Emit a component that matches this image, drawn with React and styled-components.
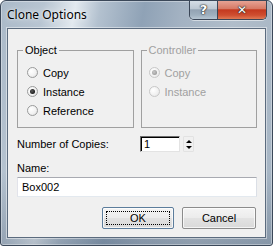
import React from "react";
import styled, { createGlobalStyle, css } from "styled-components";

const Global = createGlobalStyle`
  html, body { margin: 0; padding: 0; background: #ffffff; }
  body { width: 273px; height: 246px; overflow: hidden; }
  * { box-sizing: border-box; }
`;

const Frame = styled.div`
  width: 273px;
  height: 246px;
  display: flex;
  flex-direction: column;
  border: 1px solid #3b4859;
  border-radius: 6px 6px 3px 3px;
  background:
    linear-gradient(180deg, rgba(255,255,255,0) 0%, rgba(255,255,255,0) 70%, rgba(40,60,85,0.25) 100%),
    linear-gradient(100deg, #aab9c8 0%, #b8c5d2 14%, #e2e9ef 24%, #b3c1cf 32%, #8fa2b6 46%, #a3b2c2 58%, #b0bdca 75%, #a5b4c3 100%);
  box-shadow: inset 0 0 0 1px rgba(255,255,255,0.35);
  padding: 0 6px 7px 6px;
  overflow: hidden;
`;

const TitleBar = styled.div`
  height: 28px;
  display: flex;
  align-items: flex-start;
`;

const Title = styled.div`
  font-family: "Noto Sans", "Open Sans", sans-serif;
  font-size: 12px;
  color: #000;
  margin: 6px 0 0 0;
  line-height: 16px;
  text-shadow: 0 0 6px rgba(255,255,255,0.9), 0 0 2px rgba(255,255,255,0.8);
`;

const Caption = styled.div`
  margin-left: auto;
  margin-right: -1px;
  margin-top: -1px;
  display: flex;
  height: 20px;
  border: 1px solid #3a4657;
  border-top: none;
  border-radius: 0 0 5px 5px;
  overflow: hidden;
  box-shadow: 0 1px 0 rgba(255,255,255,0.5);
`;

const CapButton = styled.div`
  width: ${(p) => p.$w}px;
  height: 100%;
  display: flex;
  align-items: center;
  justify-content: center;
  font-family: "DejaVu Sans", sans-serif;
  font-weight: bold;
  font-size: ${(p) => p.$fs}px;
  color: #fff;
  text-shadow: 0 0 1px #222, 0 0 1px #222, 0 0 2px #333;
  ${(p) =>
    p.$close
      ? css`
          background: linear-gradient(180deg, #e8a89a 0%, #d77a66 45%, #c4391f 52%, #cf4e30 80%, #e07a55 100%);
        `
      : css`
          border-right: 1px solid #3a4657;
          background: linear-gradient(180deg, #d8e0e8 0%, #bdc8d3 45%, #93a3b3 52%, #9fb0bf 80%, #b7c6d2 100%);
        `}
`;

const Client = styled.div`
  flex: 1;
  background: #f0f0f0;
  border: 1px solid #5b6b7e;
  box-shadow: 0 0 0 1px rgba(255,255,255,0.45);
  display: flex;
  flex-direction: column;
  padding: 15px 8px 8px 9px;
  font-family: "Liberation Sans", Arial, sans-serif;
  font-size: 11px;
  color: #000;
`;

const Groups = styled.div`
  display: flex;
  gap: 7px;
`;

const Group = styled.fieldset`
  margin: 0;
  width: ${(p) => p.$w}px;
  height: 84px;
  border: 1px solid #a0a0a0;
  border-radius: 0;
  padding: 6px 0 0 ${(p) => p.$pl}px;
  display: flex;
  flex-direction: column;
  color: ${(p) => (p.$disabled ? "#a0a0a0" : "#000")};
`;

const Legend = styled.legend`
  padding: 0 2px;
  margin-left: ${(p) => p.$ml}px;
  line-height: 13px;
  font-size: 11px;
`;

const RadioRow = styled.label`
  display: flex;
  align-items: center;
  height: 19px;
  gap: 5px;
`;

const RadioCircle = styled.span`
  width: 11px;
  height: 11px;
  border-radius: 50%;
  flex: none;
  display: flex;
  align-items: center;
  justify-content: center;
  border: 1px solid ${(p) => (p.$disabled ? "#c8c8c8" : "#9a9b9b")};
  background: ${(p) =>
    p.$disabled
      ? "radial-gradient(circle at 35% 35%, #ffffff 0%, #f0f0f0 60%, #dedede 100%)"
      : "radial-gradient(circle at 35% 35%, #ffffff 0%, #f2f2f2 55%, #d8d8d8 100%)"};
  &::after {
    content: "";
    width: 5px;
    height: 5px;
    border-radius: 50%;
    display: ${(p) => (p.$checked ? "block" : "none")};
    background: ${(p) =>
      p.$disabled
        ? "radial-gradient(circle at 40% 40%, #c8c8c8, #8c8c8c)"
        : "radial-gradient(circle at 40% 40%, #5a5a5a, #000)"};
  }
`;

const Radio = ({ label, checked, disabled }) => (
  <RadioRow>
    <RadioCircle $checked={checked} $disabled={disabled} />
    <span>{label}</span>
  </RadioRow>
);

const CopiesRow = styled.div`
  display: flex;
  align-items: center;
  margin-top: 8px;
  height: 16px;
`;

const FieldLabel = styled.span`
  width: 123px;
`;

const SpinInput = styled.div`
  width: 40px;
  height: 16px;
  background: #fff;
  border-top: 1px solid #6d6d6d;
  border-left: 1px solid #6d6d6d;
  border-right: 1px solid #e3e3e3;
  border-bottom: 1px solid #e3e3e3;
  box-shadow: inset 1px 1px 0 #000;
  padding: 1px 0 0 3px;
  line-height: 13px;
`;

const Spinner = styled.div`
  width: 11px;
  height: 16px;
  margin-left: 3px;
  display: flex;
  flex-direction: column;
  align-items: center;
  justify-content: center;
  gap: 3px;
  border: 1px solid #e2e2e2;
  border-radius: 1px;
`;

const Arrow = styled.span`
  width: 0;
  height: 0;
  border-left: 3px solid transparent;
  border-right: 3px solid transparent;
  ${(p) =>
    p.$down
      ? css`border-top: 3px solid #000;`
      : css`border-bottom: 3px solid #000;`}
`;

const NameLabel = styled.div`
  margin-top: 10px;
  line-height: 13px;
`;

const TextInput = styled.div`
  margin-top: 2px;
  width: 240px;
  height: 20px;
  background: #fff;
  border: 1px solid #abadb3;
  border-top-color: #a8aab1;
  border-bottom-color: #e3e9ef;
  border-right-color: #dbdfe6;
  border-left-color: #e2e3ea;
  padding: 3px 0 0 4px;
  line-height: 13px;
`;

const Buttons = styled.div`
  display: flex;
  justify-content: flex-end;
  gap: 8px;
  margin-top: 10px;
  padding-right: 1px;
`;

const Button = styled.div`
  width: ${(p) => p.$w}px;
  height: 22px;
  display: flex;
  align-items: center;
  justify-content: center;
  background: linear-gradient(180deg, #f4f4f4 0%, #ececec 48%, #e2e2e2 52%, #d9d9d9 100%);
  border: 1px solid ${(p) => (p.$default ? "#5c7d9c" : "#8c8c8c")};
  border-radius: 2px;
  box-shadow: inset 0 0 0 1px rgba(255,255,255,0.7);
  position: relative;
  font-size: 11px;
  ${(p) =>
    p.$default &&
    css`
      &::after {
        content: "";
        position: absolute;
        inset: 3px;
        border: 1px dotted #000;
      }
    `}
`;

export default function App() {
  return (
    <>
      <Global />
      <Frame>
        <TitleBar>
          <Title>Clone Options</Title>
          <Caption>
            <CapButton $w={28} $fs={13}>?</CapButton>
            <CapButton $w={48} $fs={12} $close>✕</CapButton>
          </Caption>
        </TitleBar>
        <Client>
          <Groups>
            <Group $w={117} $pl={9}>
              <Legend $ml={-4}>Object</Legend>
              <Radio label="Copy" />
              <Radio label="Instance" checked />
              <Radio label="Reference" />
            </Group>
            <Group $w={117} $pl={7} $disabled>
              <Legend $ml={-2}>Controller</Legend>
              <Radio label="Copy" checked disabled />
              <Radio label="Instance" disabled />
            </Group>
          </Groups>
          <CopiesRow>
            <FieldLabel>Number of Copies:</FieldLabel>
            <SpinInput>1</SpinInput>
            <Spinner>
              <Arrow />
              <Arrow $down />
            </Spinner>
          </CopiesRow>
          <NameLabel>Name:</NameLabel>
          <TextInput>Box002</TextInput>
          <Buttons>
            <Button $w={72} $default>OK</Button>
            <Button $w={74}>Cancel</Button>
          </Buttons>
        </Client>
      </Frame>
    </>
  );
}
